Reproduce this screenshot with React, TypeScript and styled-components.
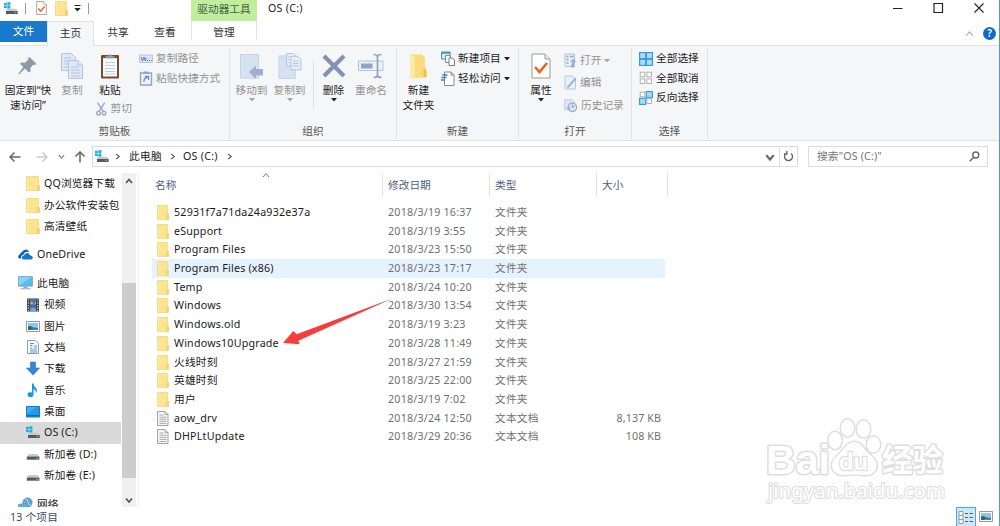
import React from "react";
import styled, { createGlobalStyle, css } from "styled-components";

const GlobalStyle = createGlobalStyle`
  * { box-sizing: border-box; }
  body { margin: 0; background: #fff; overflow: hidden; }
`;

const Window = styled.div`
  position: relative;
  width: 1000px;
  height: 526px;
  display: flex;
  flex-direction: column;
  overflow: hidden;
  background: #fff;
  border-right: 1px solid #4f9ad6;
  font-family: "Noto Sans", "Noto Sans CJK SC", sans-serif;
  font-size: 10.7px;
  line-height: 15px;
  color: #1a1a1a;
  white-space: nowrap;
`;

/* ---------- title bar and tabs ---------- */
const TitleBar = styled.header`
  display: flex;
  height: 21px;
  flex: none;
`;
const QuickAccess = styled.div`
  display: flex;
  width: 191px;
  height: 16px;
  padding-left: 4px;
  align-items: center;
`;
const Divider = styled.i<{ $l: number; $r: number }>`
  width: 1px;
  height: 11px;
  background: #9a9a9a;
  margin: 0 ${(p) => p.$r}px 0 ${(p) => p.$l}px;
`;
const Gap = styled.span<{ $w: number }>`
  width: ${(p) => p.$w}px;
  flex: none;
`;
const ContextTab = styled.div`
  width: 66px;
  background: #c0ee9c;
  color: #47604a;
  text-align: center;
  line-height: 18px;
`;
const WindowTitle = styled.div`
  padding-left: 11px;
  line-height: 16px;
  flex: 1;
  letter-spacing: 0.25px;
`;
const WindowButtons = styled.div`
  display: flex;
  height: 15px;
  align-items: center;
  gap: 30px;
  padding-right: 15px;
`;

const TabBar = styled.nav`
  display: flex;
  height: 25px;
  flex: none;
  border-bottom: 1px solid #dfe1e3;
`;
const Tab = styled.div<{ $w: number; $kind?: "file" | "active" | "context" }>`
  width: ${(p) => p.$w}px;
  height: 24px;
  text-align: center;
  line-height: 23px;
  color: #333;
  ${(p) => p.$kind === "file" && css`
    height: 21px;
    line-height: 21px;
    background: #1979ca;
    color: #fff;
  `}
  ${(p) => p.$kind === "active" && css`
    height: 25px;
    background: #f5f6f7;
    border: 1px solid #dfe1e3;
    border-bottom: 0;
    line-height: 22px;
  `}
  ${(p) => p.$kind === "context" && css`
    border: solid #e3e5e3;
    border-width: 0 1px;
    height: 19px;
  `}
`;
const TabTools = styled.div`
  display: flex;
  align-items: center;
  gap: 9px;
  margin-left: auto;
  padding-right: 3px;
`;
const Help = styled.span`
  width: 13px;
  height: 13px;
  border-radius: 50%;
  background: #0a6cce;
  color: #fff;
  font-weight: 600;
  font-size: 10px;
  line-height: 13px;
  text-align: center;
`;

/* ---------- ribbon ---------- */
const Ribbon = styled.section`
  display: flex;
  height: 95px;
  flex: none;
  background: #f5f6f7;
  border-bottom: 1px solid #dfe1e3;
`;
const Group = styled.div<{ $w: number }>`
  width: ${(p) => p.$w}px;
  display: flex;
  flex-direction: column;
  height: 91px;
  margin-top: 2px;
  border-right: 1px solid #e1e3e5;
`;
const GroupBody = styled.div<{ $pad?: number }>`
  display: flex;
  height: 75px;
  padding-left: ${(p) => p.$pad ?? 0}px;
`;
const GroupName = styled.div`
  text-align: center;
  color: #555;
  line-height: 16px;
`;
const BigButton = styled.div<{ $w: number; $off?: boolean }>`
  width: ${(p) => p.$w}px;
  display: flex;
  flex: none;
  flex-direction: column;
  align-items: center;
  text-align: center;
  padding-top: 5px;
  color: ${(p) => (p.$off ? "#929292" : "#222")};
  & > svg:first-child { margin-bottom: 4px; }
`;
const PasteColumn = styled.div`
  width: 44px;
  flex: none;
`;
const Stack = styled.div<{ $l: number; $pitch: number; $top?: number }>`
  display: grid;
  align-content: start;
  grid-auto-rows: ${(p) => p.$pitch}px;
  margin-left: ${(p) => p.$l}px;
  padding-top: ${(p) => p.$top ?? 1}px;
`;
const SmallButton = styled.div<{ $off?: boolean }>`
  display: flex;
  align-items: center;
  gap: 3px;
  color: ${(p) => (p.$off ? "#929292" : "#222")};
`;
const CutButton = styled(SmallButton)`
  margin: 3px 0 0 8px;
  gap: 4px;
`;
const InnerRule = styled.i`
  width: 1px;
  height: 49px;
  margin: 12px 0 0 4px;
  background: #dfe1e4;
`;

/* ---------- address row ---------- */
const AddressRow = styled.div`
  display: flex;
  height: 32px;
  flex: none;
  padding: 5px 11px 6px 9px;
`;
const NavButtons = styled.div`
  display: flex;
  width: 83px;
  align-items: center;
`;
const AddressBox = styled.div`
  display: flex;
  width: 706px;
  border: 1px solid #dcdcdc;
  align-items: center;
  padding-left: 2px;
`;
const Crumb = styled.span<{ $w: number }>`
  width: ${(p) => p.$w}px;
  line-height: 17px;
  letter-spacing: 0.25px;
`;
const Refresh = styled.div`
  width: 18px;
  height: 100%;
  margin-left: 4px;
  border-left: 1px solid #dcdcdc;
  display: flex;
  align-items: center;
  justify-content: center;
`;
const SearchBox = styled.div`
  display: flex;
  flex: 1;
  margin-left: 10px;
  border: 1px solid #dcdcdc;
  align-items: center;
  justify-content: space-between;
  padding: 0 7px 0 8px;
  color: #777;
  letter-spacing: 0.15px;
`;

/* ---------- body ---------- */
const Body = styled.main`
  display: flex;
  height: 334px;
  flex: none;
`;
const Side = styled.aside`
  width: 122px;
  overflow: hidden;
  padding-right: 1px;
`;
const SideSection = styled.div`
  margin-bottom: 7px;
`;
const SideItem = styled.div<{ $root?: boolean; $on?: boolean }>`
  display: flex;
  height: 21.4px;
  align-items: center;
  gap: 4px;
  letter-spacing: 0.12px;
  padding-left: ${(p) => (p.$root ? 18 : 26)}px;
  background: ${(p) => (p.$on ? "#d9d9d9" : "transparent")};
  & > svg { flex: none; }
`;
const ScrollTrack = styled.div`
  width: 14px;
  background: #f0f0f0;
  display: flex;
  flex-direction: column;
  align-items: center;
  padding: 4px 0 0;
`;
const ScrollThumb = styled.div`
  width: 14px;
  height: 195px;
  flex: none;
  margin: 98px 0 18px;
  background: #cdcdcd;
`;
const Files = styled.div`
  position: relative;
  margin-left: 2px;
  border-left: 1px solid #f2f2f2;
  padding-left: 13px;
  flex: 1;
`;
const HeadRow = styled.div`
  display: grid;
  grid-template-columns: 231px 107px 107px 71px;
  height: 24px;
  margin-bottom: 6px;
`;
const HeadCell = styled.div`
  position: relative;
  border-right: 1px solid #e3e3e3;
  padding-left: 5px;
  line-height: 24px;
  color: #4c607a;
  &:first-child { padding-left: 3px; }
`;
const SortMark = styled.span`
  position: absolute;
  left: 110px;
  top: -2px;
  line-height: 0;
`;
const FileRow = styled.div<{ $on?: boolean }>`
  display: grid;
  grid-template-columns: 236px 107px 107px 1fr;
  width: 513px;
  height: 18.72px;
  align-items: center;
  padding-right: 4px;
  background: ${(p) => (p.$on ? "#e5f3ff" : "transparent")};
`;
const FileName = styled.div`
  display: flex;
  align-items: center;
  gap: 5px;
  padding-left: 5px;
  letter-spacing: 0.2px;
`;
const Meta = styled.span<{ $right?: boolean }>`
  color: #707070;
  letter-spacing: ${(p) => (p.$right ? 0.1 : 0.2)}px;
  text-align: ${(p) => (p.$right ? "right" : "left")};
`;
const Pointer = styled.svg`
  position: absolute;
  left: 141px;
  top: 122px;
`;
const Watermark = styled.svg`
  position: absolute;
  left: 760px;
  top: 412px;
`;

const StatusBar = styled.footer`
  display: flex;
  height: 19px;
  flex: none;
  padding-left: 10px;
  line-height: 21px;
  color: #3c4d63;
  letter-spacing: 0.15px;
`;
const ViewToggle = styled.div`
  width: 20px;
  height: 21px;
  margin-left: auto;
  margin-right: 3px;
  background: #cbe8f6;
  border: 1px solid #3fb0e0;
  display: flex;
  align-items: center;
  justify-content: center;
`;
const ViewLarge = styled.div`
  width: 13px;
  margin-right: 7px;
  padding-top: 4px;
  line-height: 0;
`;

/* ---------- icons ---------- */
const Chevron = ({ dir, s = 7, c = "#555", w = 1.3 }: { dir: "up" | "down" | "right"; s?: number; c?: string; w?: number }) => (
  <svg width={s} height={s} viewBox="0 0 8 8" fill="none" stroke={c} strokeWidth={w}>
    <path d={dir === "up" ? "M1 6 4 2.5 7 6" : dir === "down" ? "M1 2.5 4 6 7 2.5" : "M2.5 1 6 4 2.5 7"} />
  </svg>
);
const Caret = ({ c = "#222" }: { c?: string }) => (
  <svg width="6" height="3.5" viewBox="0 0 6 3.5"><path d="M0 0h6L3 3.5z" fill={c} /></svg>
);
const Folder = ({ w = 12, h = 15 }: { w?: number; h?: number }) => (
  <svg width={w} height={h} viewBox="0 0 12 15" preserveAspectRatio="none">
    <path d="M.5.5h10.200v9h.9v5H.5z" fill="#fde48f" stroke="#f3d67c" strokeWidth=".8" />
    <path d="M9.300 14.300V9.300h2.300v5z" fill="#f5d268" />
    <path d="M1.700 1v13" stroke="#feeaa5" strokeWidth="1" />
  </svg>
);
const Drive = ({ win, w = 14, h = 13 }: { win?: boolean; w?: number; h?: number }) => (
  <svg width={w} height={h} viewBox="0 0 14 13">
    {win && <path d="M0 1 2.8.6v2.6H0zM3.3.5 6.4 0v3.2H3.3zM0 3.7h2.8v2.6L0 5.9zM3.3 3.7h3.1v3.1l-3.1-.4z" fill="#21aee8" />}
    <path d={win ? "M3.5 6.8h8.5l1.6 2.2H2z" : "M2.8 6h8.6l2 2.6H.8z"} fill="#c7c9ca" />
    <path d={win ? "M2 9h11.7v3H2z" : "M.8 8.5h12.6v3.2H.8z"} fill="#55595b" />
    <path d="M10.3 9.8h2v1.2h-2z" fill="#44d36a" />
  </svg>
);
const CheckSheet = ({ w, h }: { w: number; h: number }) => (
  <svg width={w} height={h} viewBox="0 0 20 26">
    <path d="M1 1h13l5 5v19H1z" fill="#fff" stroke="#9a9a9a" strokeWidth={w < 15 ? 1.6 : 1} />
    <path d="M14 1v5h5" fill="#eee" stroke="#9a9a9a" />
    <path d="m4 14 4.5 5L16 10" fill="none" stroke="#f25c1c" strokeWidth="2.5" />
  </svg>
);
const Pin = () => (
  <svg width="20" height="26" viewBox="0 0 20 26">
    <path d="m11.500 4 7 7-1.700 1-1.500-.2-3 3.300.1 3.400-1.500 1-4-4L1 21.500.3 20.800l5-6.800-3.200-3.300 1.200-1.200 3.500.2 3.600-3.300-.2-1.500z" fill="#8b9aa7" />
  </svg>
);
const Pages = ({ w = 22, h = 26 }: { w?: number; h?: number }) => (
  <svg width={w} height={h} viewBox="0 0 22 26" stroke="#b4c4e0" fill="#dfe8f5">
    <path d="M.5.5h10l4 4v13H.5z" />
    <path d="M3 5h7M3 8h8M3 11h8M3 14h8" />
    <path d="M7.500 7.500h9.500l4.500 4.500v13.500h-14z" />
    <path d="M17 7.500v4.500h4.500M10 14h8M10 17h9M10 20h9M10 23h9" />
  </svg>
);
const Clipboard = () => (
  <svg width="20" height="26" viewBox="0 0 20 26">
    <rect x="1" y="2" width="18" height="23.5" rx="1" fill="#7b4a2b" />
    <path d="M3 5h14v18.500H3z" fill="#f8fbfe" />
    <path d="M5 9.500h10M5 12.500h10M5 15.500h10M5 18.500h10M5 21h10" stroke="#a9c6dc" strokeWidth=".8" />
    <path d="M5.500 5V3h2.800a1.800 1.800 0 0 1 3.400 0h2.800v2z" fill="#9aa1a6" stroke="#777" strokeWidth=".6" />
  </svg>
);
const CopyPath = () => (
  <svg width="14" height="10" viewBox="0 0 14 10">
    <rect x=".5" y="1" width="13" height="7.500" fill="#d8e4f3" stroke="#b7c7dd" />
    <path d="m2 3 1.500 4L5 3l1.500 4L7 4M8 6.500h1M10 6.500h1M12 6.500h.8" fill="none" stroke="#6279a4" />
  </svg>
);
const PasteLink = () => (
  <svg width="14" height="15" viewBox="0 0 14 15">
    <path d="M1.500 2h11v12h-11z" fill="#eef3fa" stroke="#8fa5cd" strokeWidth="1.4" />
    <path d="M4.500.500h5v2.500h-5z" fill="#8fa5cd" />
    <path d="M5 11c-.2-3 1-4.500 3.500-4.500M6 5.500h3.500V9" fill="none" stroke="#6f8abb" strokeWidth="1.300" />
  </svg>
);
const Scissors = () => (
  <svg width="11" height="14" viewBox="0 0 11 14" fill="none" stroke="#96a9cc" strokeWidth="1.4">
    <path d="M1.500.500 7.600 9.500M9 .500 3.400 9.500" />
    <circle cx="2.600" cy="11.300" r="1.900" />
    <circle cx="8.300" cy="11.300" r="1.900" />
  </svg>
);
const MoveTo = () => (
  <svg width="23" height="26" viewBox="0 0 23 26">
    <path d="M0 1h19v24.500H0z" fill="#d6e1f1" />
    <path d="M.5 1.500h18v23.500H.5z" fill="none" stroke="#c6d5ea" />
    <path d="M9 19l7-6.500V16h7v6.500h-7V26z" fill="#9fb1cd" />
  </svg>
);
const CopyTo = () => (
  <svg width="24" height="26" viewBox="0 0 24 27">
    <path d="M.5 3h17v23.500H.5z" fill="#d6e1f1" stroke="#c6d5ea" />
    <g fill="#eaf0f9" stroke="#a9badb" strokeWidth=".9">
      <path d="M8.500.500h7l3 3v10h-10z" />
      <path d="M13 3.500h7l3.300 3.300v10.700H13z" />
      <path d="M15 8.500h6M15 11h6M15 13.500h6M10 4h2M10 7h2M10 10h2" />
    </g>
  </svg>
);
const DeleteX = () => (
  <svg width="24" height="26" viewBox="0 0 24 26">
    <path d="M2 3 22 23M22 3 2 23" stroke="#8291b5" strokeWidth="4.200" />
  </svg>
);
const Rename = () => (
  <svg width="26" height="26" viewBox="0 0 26 26" fill="none">
    <path d="M.5 8h24.500v9.500H.5z" stroke="#b3c3dc" fill="#edf2f9" />
    <path d="M3 10.500h11.500v5H3z" fill="#8fa3c7" />
    <path d="M19.500 2.500v21M15.500 1.500q3.500 0 4 2 .5-2 4-2M15.500 24.500q3.500 0 4-2 .5 2 4 2" stroke="#8fa3c7" strokeWidth="1.700" />
  </svg>
);
const NewFolder = () => (
  <svg width="17" height="26" viewBox="0 0 17 26">
    <path d="M0 1.500h12l3 3V16l2 1v7L3 25.500 0 24z" fill="#fbdb7c" />
    <path d="m0 1.500 5 3V26l-5-2z" fill="#ffe9a6" />
    <path d="M13.500 15l2.500 1v8l-2.500.4z" fill="#eec04e" />
  </svg>
);
const NewItem = () => (
  <svg width="14" height="15" viewBox="0 0 14 15">
    <path d="M.6 1h8.500v7H.6z" fill="#d9effb" stroke="#3f93b5" />
    <path d="M.6 2h8.500" stroke="#3f93b5" strokeWidth="1.500" />
    <path d="M4.500 4.500H9v7H4.500z" fill="#fff" stroke="#8b8b8b" />
    <path d="M8 7h3.500l2 2v5.500H8z" fill="#fff" stroke="#7b7b7b" />
  </svg>
);
const EasyAccess = () => (
  <svg width="14" height="15" viewBox="0 0 14 15">
    <path d="M3.500 1H10l3 3v10.500H3.500z" fill="#fff" stroke="#8b8b8b" />
    <path d="M10 1v3h3" fill="none" stroke="#8b8b8b" />
    <path d="M1.500 4h5M.5 6.500h5M0 9h4" stroke="#2e86c9" strokeWidth="1.400" />
  </svg>
);
const OpenIcon = () => (
  <svg width="13" height="15" viewBox="0 0 13 15">
    <path d="M1 1h9.500v12.500H1z" fill="#e6eef8" stroke="#b3c3df" />
    <path d="M2.500 3.500h2M2.500 6.500h2M2.500 10h2M6 3.500h3.500" stroke="#8fa5cf" strokeWidth="1.600" />
    <path d="M7 13V14.500h3.200V9H12.500L9.300 5.500 6 9h2" fill="#9db0d4" />
  </svg>
);
const EditIcon = () => (
  <svg width="13" height="15" viewBox="0 0 13 15">
    <path d="M1 1h7.500l3 3v10H1z" fill="#eaf1fa" stroke="#b6c6e0" />
    <path d="M12.500 4 5 12.500 3 13.500l.5-2.300L11 2.500z" fill="#9fb4d8" />
  </svg>
);
const HistoryIcon = () => (
  <svg width="14" height="15" viewBox="0 0 15 15">
    <path d="M.5 1h8l3 3v8H.5z" fill="#dbe6f4" stroke="#c2d1e7" />
    <circle cx="9" cy="9.500" r="4.500" fill="#dfe8f5" stroke="#93a8cd" strokeWidth="1.300" />
    <path d="M9 6.500v3l2.500-1.500M3 9.500l2 2 2-2" fill="none" stroke="#8299c4" />
  </svg>
);
const Grid4 = ({ mode }: { mode: "all" | "none" | "invert" }) => {
  const cells = [[0, 0], [1, 0], [0, 1], [1, 1]];
  return (
    <svg width="14" height="14" viewBox="0 0 14 14">
      {cells.map(([x, y]) => {
        const on = mode === "all" || (mode === "invert" && x !== y);
        const big = on ? 0 : 1;
        return (
          <rect key={`${x}${y}`} x={0.6 + x * 6.7 + big * 0.6} y={0.6 + y * 6.7 + big * 0.6}
            width={6.1 - big * 1.5} height={6.1 - big * 1.5}
            fill={on ? "#a9dbfa" : "#fff"} stroke={on ? "#2f97dc" : "#aaa"} strokeWidth={on ? 1.1 : 0.9} />
        );
      })}
    </svg>
  );
};
const Arrow = ({ d, c = "#666" }: { d: "left" | "right" | "up"; c?: string }) => (
  <svg width="12" height="12" viewBox="0 0 12 12" fill="none" stroke={c} strokeWidth="1.500">
    <path d={d === "left" ? "M11.500 6H1M5.500 1.500 1 6l4.500 4.500" : d === "right" ? "M.5 6H11M6.500 1.500 11 6l-4.500 4.500" : "M6 11.500V1M1.500 5.500 6 1l4.500 4.500"} />
  </svg>
);
const Cloud = () => (
  <svg width="15" height="11" viewBox="0 0 15 11">
    <path d="M3 9.500H1.500Q0 9 .2 7.300.5 5.800 2 5.600q0-2 2-2.500Q5.500.500 8 .600q2.500.2 3.200 2.400Q6.500 2 5.700 5.500 3 6 3 9.500z" fill="#0b62b3" />
    <path d="M5.500 10.500Q3.700 10 3.900 8.300 4.200 6.600 6 6.500 6.500 4 9 4q2.200 0 3 2.200 2.700.2 2.800 2.200-.1 1.900-2 2.100z" fill="#1377d2" />
  </svg>
);
const Computer = () => (
  <svg width="15" height="14" viewBox="0 0 15 14">
    <path d="M.6.600h13.800v9.500H.6z" fill="#58bdf3" stroke="#7893a4" strokeWidth=".8" />
    <path d="M1 1h12.500L1 9.500z" fill="#86d3fa" />
    <path d="M5.500 10.500h4v1.500h-4zM2.500 12.300h10v1h-10z" fill="#90a8b6" />
  </svg>
);
const Video = () => (
  <svg width="14" height="14" viewBox="0 0 14 14">
    <path d="M1 .5h12v13H1z" fill="#3b3b3b" />
    <path d="M3.800 1h6.400v5.500H3.800zM3.800 7.300h6.400V13H3.800z" fill="#3c74c8" />
    <path d="M4 5q2-3 3 0t3-2v3.500H4z" fill="#dba43a" /><path d="M4 12q2-4 6-1v2H4z" fill="#6da6e5" />
    <path d="M2.300 1.500v11.500M11.700 1.500v11.500" stroke="#ddd" strokeWidth="1.200" strokeDasharray="1.3 1.400" />
  </svg>
);
const Picture = () => (
  <svg width="14" height="11" viewBox="0 0 14 11">
    <path d="M.5.500h13v10H.5z" fill="#fff" stroke="#999" />
    <path d="M2 2h10v7H2z" fill="#8dc3f5" />
    <path d="M2 5.500q3-1.500 5 1l5 .5v2H2z" fill="#2d6a68" /><path d="M6 7.500h6V9H5z" fill="#4b86b8" />
  </svg>
);
const Doc = () => (
  <svg width="14" height="14" viewBox="0 0 14 14">
    <path d="M1.500 .5h8l3 3v10h-11z" fill="#fff" stroke="#999" />
    <path d="M4 3.500h4M4 5.500h2.500M8 6h3M4 8h2.500M8 8h3M4 10h7M4 12h7" stroke="#4a97cd" />
  </svg>
);
const Download = () => (
  <svg width="14" height="15" viewBox="0 0 14 15"><path d="M4.500 1h5v6H13.500L7 14 .5 7h4z" fill="#3486dc" stroke="#2a70c0" strokeWidth=".6" /></svg>
);
const Music = () => (
  <svg width="14" height="15" viewBox="0 0 14 15">
    <path d="M6 .5h1.500q.3 2.500 2 4 2.400 2.500.5 6 .3-3.500-2.500-4.500v5.500A3 2.500 0 1 1 6 9.500z" fill="#1198ee" />
  </svg>
);
const Desktop = () => (
  <svg width="14" height="12" viewBox="0 0 14 12"><path d="M.5.500h13v10.500H.5z" fill="#1b9cf2" stroke="#1477bf" /><path d="M1 9.700h12" stroke="#0d5d9b" /><path d="M1 1h10L1 8z" fill="#3db0fa" /></svg>
);
const Network = () => (
  <svg width="15" height="14" viewBox="0 0 15 14">
    <circle cx="9.500" cy="5.500" r="5" fill="#5b9fca" /><path d="M7 2q3 0 3 3t3 3M6 6q3-1 3 3" stroke="#bfe0ee" fill="none" />
    <path d="m.5 7.500 8-1.500v6.500l-8-1z" fill="#4db7ee" stroke="#6d8797" strokeWidth=".7" />
  </svg>
);
const TextFile = () => (
  <svg width="12" height="15" viewBox="0 0 12 15">
    <path d="M.5.500H8l3 3v11H.5z" fill="#f7f7f7" stroke="#999" strokeWidth=".9" />
    <path d="M8 .5v3h3M2.500 4h4M2.500 6.200h7M2.500 8.300h7M2.500 10.400h7M2.500 12.500h7" fill="none" stroke="#999" strokeWidth=".8" />
  </svg>
);

/* ---------- data ---------- */
type Entry = { name: string; date: string; size?: string; on?: boolean };
const entries: Entry[] = [
  { name: "52931f7a71da24a932e37a", date: "2018/3/19 16:37" },
  { name: "eSupport", date: "2018/3/19 3:55" },
  { name: "Program Files", date: "2018/3/23 15:50" },
  { name: "Program Files (x86)", date: "2018/3/23 17:17", on: true },
  { name: "Temp", date: "2018/3/24 10:20" },
  { name: "Windows", date: "2018/3/30 13:54" },
  { name: "Windows.old", date: "2018/3/19 3:23" },
  { name: "Windows10Upgrade", date: "2018/3/28 11:49" },
  { name: "火线时刻", date: "2018/3/27 21:59" },
  { name: "英雄时刻", date: "2018/3/25 22:00" },
  { name: "用户", date: "2018/3/19 7:02" },
  { name: "aow_drv", date: "2018/3/24 12:50", size: "8,137 KB" },
  { name: "DHPLtUpdate", date: "2018/3/29 20:36", size: "108 KB" },
];
const pcItems: [string, React.ReactNode][] = [
  ["视频", <Video />],
  ["图片", <Picture />],
  ["文档", <Doc />],
  ["下载", <Download />],
  ["音乐", <Music />],
  ["桌面", <Desktop />],
  ["OS (C:)", <Drive win />],
  ["新加卷 (D:)", <Drive />],
  ["新加卷 (E:)", <Drive />],
];

export default function App() {
  return (
    <Window>
      <GlobalStyle />
      <TitleBar>
        <QuickAccess>
          <Drive win />
          <Divider $l={7} $r={10} />
          <CheckSheet w={11} h={14} />
          <Gap $w={8} />
          <Folder w={13} h={15} />
          <Gap $w={6} />
          <svg width="7" height="7" viewBox="0 0 7 7"><path d="M.5 .5h6" stroke="#222" /><path d="M.3 3h6.400L3.500 6.500z" fill="#222" /></svg>
          <Divider $l={7} $r={0} />
        </QuickAccess>
        <ContextTab>驱动器工具</ContextTab>
        <WindowTitle>OS (C:)</WindowTitle>
        <WindowButtons>
          <svg width="10" height="10"><path d="M0 5.500h9.500" stroke="#222" /></svg>
          <svg width="11" height="10"><path d="M1 .5h8.500v9H1z" fill="none" stroke="#222" strokeWidth="1.200" /></svg>
          <svg width="10" height="10"><path d="m.5.500 9 9m0-9-9 9" stroke="#222" strokeWidth="1.100" /></svg>
        </WindowButtons>
      </TitleBar>
      <TabBar>
        <Tab $w={47} $kind="file">文件</Tab>
        <Tab $w={47} $kind="active">主页</Tab>
        <Tab $w={48}>共享</Tab>
        <Tab $w={46}>查看</Tab>
        <Gap $w={3} />
        <Tab $w={66} $kind="context">管理</Tab>
        <TabTools>
          <Chevron dir="up" s={9} c="#aaa" w={1} />
          <Help>?</Help>
        </TabTools>
      </TabBar>

      <Ribbon>
        <Group $w={230}>
          <GroupBody>
            <BigButton $w={56}><Pin /><span>固定到“快</span><span>速访问”</span></BigButton>
            <BigButton $w={32} $off><Pages /><span>复制</span></BigButton>
            <PasteColumn>
              <BigButton $w={44}><Clipboard /><span>粘贴</span></BigButton>
              <CutButton $off><Scissors /><span>剪切</span></CutButton>
            </PasteColumn>
            <Stack $l={7} $pitch={19.500}>
              <SmallButton $off><CopyPath />复制路径</SmallButton>
              <SmallButton $off><PasteLink />粘贴快捷方式</SmallButton>
            </Stack>
          </GroupBody>
          <GroupName>剪贴板</GroupName>
        </Group>
        <Group $w={167}>
          <GroupBody $pad={3}>
            <BigButton $w={37} $off><MoveTo /><span>移动到</span><Caret c="#a5a5a5" /></BigButton>
            <BigButton $w={39} $off><CopyTo /><span>复制到</span><Caret c="#a5a5a5" /></BigButton>
            <InnerRule />
            <BigButton $w={39}><DeleteX /><span>删除</span><Caret /></BigButton>
            <BigButton $w={36} $off><Rename /><span>重命名</span></BigButton>
          </GroupBody>
          <GroupName>组织</GroupName>
        </Group>
        <Group $w={122}>
          <GroupBody>
            <BigButton $w={43}><NewFolder /><span>新建</span><span>文件夹</span></BigButton>
            <Stack $l={1} $pitch={19.500}>
              <SmallButton><NewItem />新建项目<Caret /></SmallButton>
              <SmallButton><EasyAccess />轻松访问<Caret /></SmallButton>
            </Stack>
          </GroupBody>
          <GroupName>新建</GroupName>
        </Group>
        <Group $w={113}>
          <GroupBody>
            <BigButton $w={44}><CheckSheet w={20} h={26} /><span>属性</span><Caret /></BigButton>
            <Stack $l={1} $pitch={22.500}>
              <SmallButton $off><OpenIcon />打开<Caret c="#a5a5a5" /></SmallButton>
              <SmallButton $off><EditIcon />编辑</SmallButton>
              <SmallButton $off><HistoryIcon />历史记录</SmallButton>
            </Stack>
          </GroupBody>
          <GroupName>打开</GroupName>
        </Group>
        <Group $w={76}>
          <GroupBody>
            <Stack $l={7} $pitch={19.500}>
              <SmallButton><Grid4 mode="all" />全部选择</SmallButton>
              <SmallButton><Grid4 mode="none" />全部取消</SmallButton>
              <SmallButton><Grid4 mode="invert" />反向选择</SmallButton>
            </Stack>
          </GroupBody>
          <GroupName>选择</GroupName>
        </Group>
      </Ribbon>

      <AddressRow>
        <NavButtons>
          <Arrow d="left" /><Gap $w={15} /><Arrow d="right" c="#ccc" /><Gap $w={10} />
          <Chevron dir="down" c="#777" /><Gap $w={9} /><Arrow d="up" />
        </NavButtons>
        <AddressBox>
          <Drive win /><Gap $w={5} />
          <Chevron dir="right" /><Gap $w={8} />
          <Crumb $w={40}>此电脑</Crumb>
          <Chevron dir="right" /><Gap $w={7} />
          <Crumb $w={43}>OS (C:)</Crumb>
          <Chevron dir="right" />
          <Gap $w={532} />
          <Chevron dir="down" s={10} w={1.700} c="#666" />
          <Refresh>
            <svg width="11" height="11" viewBox="0 0 11 11" fill="none" stroke="#666" strokeWidth="1.400"><path d="M3 2.500A4 4 0 1 0 8 2.500M3.800 0v3H1" /></svg>
          </Refresh>
        </AddressBox>
        <SearchBox>
          搜索"OS (C:)"
          <svg width="11" height="11" viewBox="0 0 11 11" fill="none" stroke="#666" strokeWidth="1.400"><circle cx="6.800" cy="4" r="3" /><path d="M4.700 6.200.7 10.300" /></svg>
        </SearchBox>
      </AddressRow>

      <Body>
        <Side>
          <SideSection>
            <SideItem><Folder w={14} h={15} />QQ浏览器下载</SideItem>
            <SideItem><Folder w={14} h={15} />办公软件安装包</SideItem>
            <SideItem><Folder w={14} h={15} />高清壁纸</SideItem>
          </SideSection>
          <SideSection><SideItem $root><Cloud />OneDrive</SideItem></SideSection>
          <SideSection>
            <SideItem $root><Computer />此电脑</SideItem>
            {pcItems.map(([label, icon]) => (
              <SideItem key={label} $on={label === "OS (C:)"}>{icon}{label}</SideItem>
            ))}
          </SideSection>
          <SideItem $root><Network />网络</SideItem>
        </Side>
        <ScrollTrack>
          <Chevron dir="up" s={8} w={1.700} />
          <ScrollThumb />
          <Chevron dir="down" s={8} w={1.700} />
        </ScrollTrack>
        <Files>
          <HeadRow>
            <HeadCell>名称<SortMark><Chevron dir="up" s={8} w={1} c="#777" /></SortMark></HeadCell>
            <HeadCell>修改日期</HeadCell>
            <HeadCell>类型</HeadCell>
            <HeadCell>大小</HeadCell>
          </HeadRow>
          {entries.map((e) => (
            <FileRow key={e.name} $on={e.on}>
              <FileName>{e.size ? <TextFile /> : <Folder />}{e.name}</FileName>
              <Meta>{e.date}</Meta>
              <Meta>{e.size ? "文本文档" : "文件夹"}</Meta>
              <Meta $right>{e.size}</Meta>
            </FileRow>
          ))}
          <Pointer width="116" height="52" viewBox="280 295 116 52">
            <path d="M283 343 293.300 331 296.500 334.300 393 298.300 298.300 340.700 299.700 344.200z" fill="#f73c3c" />
          </Pointer>
        </Files>
      </Body>
      <StatusBar>
        13 个项目
        <ViewToggle>
          <svg width="16" height="13" viewBox="0 0 16 13">
            <path d="M1 .5h4v12H1zM1 4.500h4M1 8.500h4" fill="#fff" stroke="#8d9296" strokeWidth=".9" />
            <path d="M7 2.500h3M11.500 2.500h3.500M7 6.500h3M11.500 6.500h3.500M7 10.500h3M11.500 10.500h3.500" stroke="#5a6064" />
          </svg>
        </ViewToggle>
        <ViewLarge><Picture /></ViewLarge>
      </StatusBar>

      <Watermark width="200" height="96" viewBox="760 412 200 96" fill="#fff" stroke="#dedede" strokeWidth="3" strokeLinejoin="round" paintOrder="stroke" fontFamily='"Liberation Sans", "Noto Sans CJK SC", sans-serif' fontWeight="bold">
        <text x="766" y="474" fontSize="40" textLength="64" lengthAdjust="spacingAndGlyphs">Bai</text>
        <ellipse cx="835" cy="440.500" rx="6.500" ry="8.500" />
        <ellipse cx="847.500" cy="428" rx="6.500" ry="8.500" />
        <ellipse cx="863.500" cy="429" rx="6.500" ry="8.500" />
        <ellipse cx="873.500" cy="444.500" rx="6.500" ry="8" />
        <path d="M854 442c7 0 9 6 13 10s10 7 9.500 14c-.5 8-7 9.500-13 9-6-.8-13-.8-19 0-7 .5-12.500-3-12.500-10 0-6 5-8 9-13 4-4 7-10 13-10z" />
        <text x="839" y="470" fontSize="24" textLength="29" lengthAdjust="spacingAndGlyphs" strokeWidth="2.400">du</text>
        <text x="882" y="471" fontSize="31" textLength="61" lengthAdjust="spacingAndGlyphs">经验</text>
        <text x="768" y="498" fontSize="20" fontWeight="normal" fontFamily='"Noto Sans", sans-serif' strokeWidth="2.200" textLength="177" lengthAdjust="spacingAndGlyphs">jingyan.baidu.com</text>
      </Watermark>
    </Window>
  );
}
